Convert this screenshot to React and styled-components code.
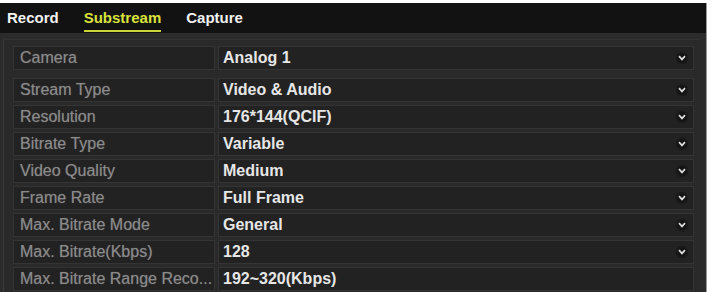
import styled, { createGlobalStyle } from "styled-components";

const GlobalStyle = createGlobalStyle`
  html, body {
    margin: 0;
    padding: 0;
    background: #ffffff;
  }
  body {
    font-family: "Liberation Sans", Arial, sans-serif;
  }
`;

const rows = [
  { label: "Camera", value: "Analog 1", select: true },
  { label: "Stream Type", value: "Video & Audio", select: true },
  { label: "Resolution", value: "176*144(QCIF)", select: true },
  { label: "Bitrate Type", value: "Variable", select: true },
  { label: "Video Quality", value: "Medium", select: true },
  { label: "Frame Rate", value: "Full Frame", select: true },
  { label: "Max. Bitrate Mode", value: "General", select: true },
  { label: "Max. Bitrate(Kbps)", value: "128", select: true },
  { label: "Max. Bitrate Range Reco...", value: "192~320(Kbps)", select: false },
];

const tabs = ["Record", "Substream", "Capture"];

function Chevron() {
  return (
    <ArrowWrap>
      <svg width="8" height="6" viewBox="0 0 8 6">
        <path d="M1 1.2 L4 4.4 L7 1.2" fill="none" stroke="#dcdcdc" strokeWidth="1.7" />
      </svg>
    </ArrowWrap>
  );
}

export default function App() {
  return (
    <>
      <GlobalStyle />
      <Frame>
        <TabBar>
          {tabs.map((t) => (
            <Tab key={t} active={t === "Substream"}>
              {t}
            </Tab>
          ))}
        </TabBar>
        <Panel>
          <Table>
            {rows.map((r, i) => (
              <Row key={r.label} first={i === 0}>
                <LabelCell>{r.label}</LabelCell>
                <ValueCell>
                  <span>{r.value}</span>
                  {r.select && <Chevron />}
                </ValueCell>
              </Row>
            ))}
          </Table>
        </Panel>
      </Frame>
    </>
  );
}

const Frame = styled.div`
  margin-top: 3px;
  width: 706px;
  height: 289px;
  background: #2b2b2b;
  border-right: 1px solid #9a9a9a;
  display: flex;
  flex-direction: column;
  overflow: hidden;
`;

const TabBar = styled.div`
  height: 30px;
  background: #121212;
  display: flex;
  align-items: flex-end;
  gap: 25px;
  padding: 0 0 0 7px;
  box-sizing: border-box;
`;

const Tab = styled.div`
  font-size: 15px;
  font-weight: bold;
  line-height: 18px;
  padding-bottom: 3px;
  margin-bottom: 1px;
  color: ${(p) => (p.active ? "#d9e23c" : "#f2f2f2")};
  border-bottom: 2px solid ${(p) => (p.active ? "#c9d43a" : "transparent")};
`;

const Panel = styled.div`
  flex: 1;
  margin: 6px 6px 0 3px;
  padding: 6px 6px 0 9px;
  border-left: 1px solid #3a3a3a;
  border-top: 1px solid #333;
  background: #2a2a2a;
`;

const Table = styled.div`
  display: flex;
  flex-direction: column;
  gap: 3px;
`;

const Row = styled.div`
  display: grid;
  grid-template-columns: 202px 1fr;
  gap: 3px;
  height: 24px;
  margin-bottom: ${(p) => (p.first ? "5px" : "0")};
`;

const Cell = styled.div`
  background: #222222;
  border: 1px solid #343434;
  box-sizing: border-box;
  display: flex;
  align-items: center;
  font-size: 16px;
`;

const LabelCell = styled(Cell)`
  padding-left: 6px;
  color: #8a8a8a;
  text-shadow: 0 0 1px rgba(150, 150, 150, 0.5);
  white-space: nowrap;
  overflow: hidden;
`;

const ValueCell = styled(Cell)`
  padding: 0 4px 0 4px;
  justify-content: space-between;
  color: #e6e6e6;
  font-weight: bold;
`;

const ArrowWrap = styled.div`
  width: 14px;
  height: 14px;
  border-radius: 50%;
  background: radial-gradient(circle, #141414 40%, #222 75%);
  display: flex;
  align-items: center;
  justify-content: center;
`;
